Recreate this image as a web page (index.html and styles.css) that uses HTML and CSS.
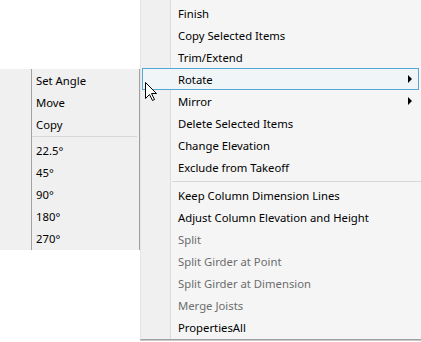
FILE: index.html
```html
<!DOCTYPE html>
<html lang="en">
<head>
    <meta charset="UTF-8">
    <title>Context Menu</title>
    <link rel="stylesheet" href="styles.css">
</head>
<body>
    <div class="desk">
        <!-- Rotate submenu -->
        <div class="menu submenu">
            <div class="item">Set Angle</div>
            <div class="item">Move</div>
            <div class="item">Copy</div>
            <div class="sep"></div>
            <div class="item">22.5°</div>
            <div class="item">45°</div>
            <div class="item">90°</div>
            <div class="item">180°</div>
            <div class="item">270°</div>
        </div>

        <!-- main context menu -->
        <div class="menu main">
            <div class="item">Finish</div>
            <div class="item">Copy Selected Items</div>
            <div class="item">Trim/Extend</div>
            <div class="item hover has-sub">Rotate</div>
            <div class="item has-sub">Mirror</div>
            <div class="item">Delete Selected Items</div>
            <div class="item">Change Elevation</div>
            <div class="item">Exclude from Takeoff</div>
            <div class="sep"></div>
            <div class="item">Keep Column Dimension Lines</div>
            <div class="item">Adjust Column Elevation and Height</div>
            <div class="item disabled">Split</div>
            <div class="item disabled">Split Girder at Point</div>
            <div class="item disabled">Split Girder at Dimension</div>
            <div class="item disabled">Merge Joists</div>
            <div class="item">PropertiesAll</div>
        </div>

        <svg class="cursor" width="13" height="20" viewBox="0 0 13 20">
            <path d="M0.5 0.5 L0.5 16.5 L4.5 12.5 L7.5 18.5 L9.5 17.5 L6.5 11.5 L11.5 11.5 Z" fill="#fff" stroke="#000" stroke-width="1"/>
        </svg>
    </div>
</body>
</html>
```

FILE: styles.css
```css
body {
    margin: 0;
    background-color: #fff;
    font-family: "Noto Sans", "Open Sans", sans-serif;
    font-size: 11.3px;
    color: #000;
}
.desk {
    position: relative;
    display: flex;
    align-items: flex-start;
    width: 421px;
    height: 342px;
    overflow: hidden;
}
.menu {
    box-sizing: border-box;
}
.item {
    height: 22px;
    line-height: 24px;
    white-space: nowrap;
}

/* left submenu */
.submenu {
    width: 140px;
    margin-top: 69px;
    height: 181px;
    background-color: #f0f0f0;
    border-right: 1px solid #a0a0a0;
    background-image: linear-gradient(#a0a0a0, #a0a0a0);
    background-size: 1px 100%;
    background-position: 31px 0;
    background-repeat: no-repeat;
}
.submenu .item {
    padding-left: 36px;
}
.submenu .sep {
    height: 1px;
    margin: 1px 2px 2px 32px;
    background-color: #d7d7d7;
}

/* main menu */
.main {
    flex: 1;
    height: 340px;
    padding-top: 2px;
    background-color: #f5f5f5;
    border-left: 1px solid #e4e4e4;
    border-bottom: 1px solid #a0a0a0;
    box-shadow: 0 1px 0 #c8c8c8;
    background-image: linear-gradient(#f0f0f0, #f0f0f0), linear-gradient(#dcdcdc, #dcdcdc);
    background-size: 29px 100%, 1px 100%;
    background-position: 0 0, 29px 0;
    background-repeat: no-repeat;
}
.main .item {
    position: relative;
    margin: 0 2px 0 1px;
    padding-left: 35px;
    border: 1px solid transparent;
    height: 20px;
    line-height: 22px;
}
.main .sep {
    height: 1px;
    margin: 3px 0 2px 31px;
    background-color: #d7d7d7;
}
.main .hover {
    border-color: #52a8d4;
    background-color: #f0f5f8;
}
.has-sub::after {
    content: "";
    position: absolute;
    right: 6px;
    top: 6px;
    border-left: 4px solid #000;
    border-top: 4px solid transparent;
    border-bottom: 4px solid transparent;
}
.disabled {
    color: #6d6d6d;
}

.cursor {
    position: absolute;
    left: 145px;
    top: 82px;
}
```
